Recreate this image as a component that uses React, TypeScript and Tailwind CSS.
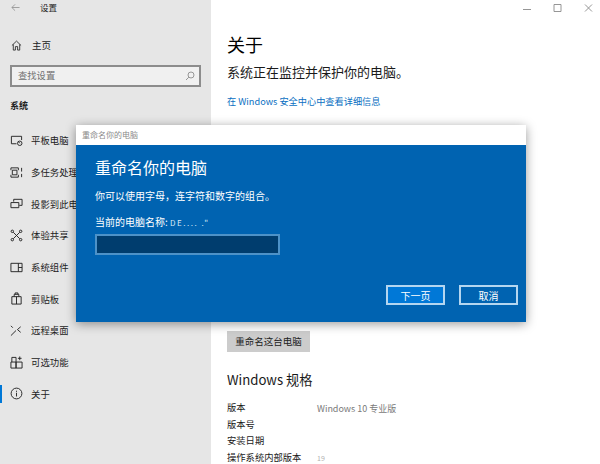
import React from 'react';

const FONT = '"Noto Sans CJK SC", "Liberation Sans", sans-serif';

function Icon({ children, className = '' }: { children: React.ReactNode; className?: string }) {
  return (
    <svg viewBox="0 0 14 14" fill="none" stroke="currentColor" strokeWidth="1" className={`w-[13px] h-[13px] shrink-0 ${className}`}>
      {children}
    </svg>
  );
}

const NAV_ITEMS: { label: string; icon: React.ReactNode }[] = [
  {
    label: '平板电脑',
    icon: (
      <>
        <path d="M7 10.500H1.500v-8h11v4" />
        <circle cx="10.500" cy="10" r="2.400" />
        <path d="M9 8l1.500 2" />
      </>
    ),
  },
  {
    label: '多任务处理',
    icon: (
      <>
        <path d="M1 2h8M1 12h8M2.500 4.500h5v5h-5zM1 2v2.500M1 9.500V12M9 2v2.500M9 9.500V12" />
        <path d="M12.500 2v4M12.500 8.500v3.500" />
      </>
    ),
  },
  {
    label: '投影到此电脑',
    icon: <path d="M4 5V2.500h9v6.500h-3M1 6h8.500v5.500H1z" />,
  },
  {
    label: '体验共享',
    icon: (
      <>
        <circle cx="2.500" cy="2.500" r="1.300" />
        <circle cx="11.500" cy="2.500" r="1.300" />
        <circle cx="2.500" cy="11.500" r="1.300" />
        <circle cx="11.500" cy="11.500" r="1.300" />
        <path d="M3.500 3.500l7 7M10.500 3.500l-7 7" />
      </>
    ),
  },
  {
    label: '系统组件',
    icon: <path d="M1 2.500h12v9H1zM9 2.500v9M9 7h4" />,
  },
  {
    label: '剪贴板',
    icon: <path d="M2 5h10v8H2zM7 5v8M4.500 5V2.500h5V5M5.500 2.500V1h3v1.500" />,
  },
  {
    label: '远程桌面',
    icon: <path d="M1 12.500l5.500-5.500M1 2l2 2M11.500 3L8 6l3.500 3" />,
  },
  {
    label: '可选功能',
    icon: <path d="M1 6.500h5.500V13H1zM6.500 6.500H13V13H6.500zM2 6.500V1.500h4.500v5M10.500 0.500v4M8.500 2.500h4" />,
  },
  {
    label: '关于',
    icon: (
      <>
        <circle cx="7" cy="7" r="5.800" />
        <path d="M7 6.200v4M7 4v1.200" />
      </>
    ),
  },
];

const SPEC_ROWS: [string, string][] = [
  ['版本', 'Windows 10 专业版'],
  ['版本号', ''],
  ['安装日期', ''],
  ['操作系统内部版本', '19'],
];

function Sidebar() {
  return (
    <aside className="w-[211px] h-full shrink-0 bg-[#e6e6e6] text-[#222222] flex flex-col">
      <div className="h-[15px] flex items-center pl-[11px]">
        <svg viewBox="0 0 10 10" fill="none" stroke="#8f8f8f" strokeWidth="0.9" className="w-[9px] h-[9px]">
          <path d="M9.500 5H1M4.500 1.500L1 5l3.500 3.500" />
        </svg>
        <span className="ml-[20px] text-[8.500px] leading-[15px]">设置</span>
      </div>
      <div className="mt-[21px] h-[18px] flex items-center pl-[11px]">
        <svg viewBox="0 0 12 12" fill="none" stroke="currentColor" strokeWidth="0.9" className="w-[11px] h-[11px]">
          <path d="M1 6l5-4.800L11 6M2.500 4.800V11h2.300V7.200h2.400V11h2.300V4.800" />
        </svg>
        <span className="ml-[10px] text-[9.500px] leading-[18px]">主页</span>
      </div>
      <div className="mt-[11px] mx-[10px] h-[22px] border-2 border-[#8c8c8c] bg-[#f0f0f0] flex items-center justify-between pl-[6px] pr-[4px]">
        <span className="text-[9.300px] text-[#707070]">查找设置</span>
        <svg viewBox="0 0 10 10" fill="none" stroke="#808080" strokeWidth="0.8" className="w-[10px] h-[10px]">
          <circle cx="6" cy="4" r="3" />
          <path d="M3.800 6.200L1 9" />
        </svg>
      </div>
      <div className="mt-[11px] pl-[10px] text-[9px] leading-[16px] font-bold">系统</div>
      <nav className="mt-[10.500px] flex flex-col">
        {NAV_ITEMS.map((item) => (
          <div key={item.label} className="relative h-[31.700px] flex items-center pl-[10px] overflow-hidden">
            {item.label === '关于' && <div className="absolute left-0 top-[7px] bottom-[7px] w-[2px] bg-[#0078d7]" />}
            <Icon>{item.icon}</Icon>
            <span className="ml-[8px] text-[9.400px] whitespace-nowrap">{item.label}</span>
          </div>
        ))}
      </nav>
    </aside>
  );
}

function MainPanel() {
  return (
    <main className="flex-1 h-full bg-white pl-[16px] text-[#1a1a1a] overflow-hidden">
      <div className="h-[15px] flex items-center justify-end text-[#8a8a8a]">
        <svg viewBox="0 0 80 10" fill="none" stroke="currentColor" strokeWidth="0.9" className="w-[80px] h-[10px]">
          <path d="M3 6.500h8" />
          <path d="M34 1.500h7v7h-7z" />
          <path d="M65 1.500l7 7M72 1.500l-7 7" />
        </svg>
      </div>
      <h1 className="mt-[16px] text-[18px] leading-[26px] font-normal text-black">关于</h1>
      <p className="mt-[6px] text-[13px] leading-[18px]">系统正在监控并保护你的电脑。</p>
      <a className="block mt-[12px] text-[9.200px] leading-[16px] text-[#0a6fc2]">在 Windows 安全中心中查看详细信息</a>
      <div className="mt-[222px] w-[83px] h-[21px] bg-[#cccccc] flex items-center justify-center text-[9.500px] text-[#222222]">
        重命名这台电脑
      </div>
      <h2 className="mt-[17px] text-[13.200px] leading-[22px] font-normal">Windows 规格</h2>
      <div className="mt-[9px] flex flex-col">
        {SPEC_ROWS.map(([label, value]) => (
          <div key={label} className="h-[16.500px] flex items-center text-[9.300px]">
            <span className="w-[90px] whitespace-nowrap">{label}</span>
            <span className={`whitespace-nowrap ${value === '19' ? 'text-[#b0b0b0] text-[7px]' : 'text-[#7a7a7a] text-[9px]'}`}>{value}</span>
          </div>
        ))}
      </div>
    </main>
  );
}

function RenameDialog() {
  return (
    <div className="absolute left-[76px] top-[125px] w-[450px] h-[197px] flex flex-col shadow-[0_2px_10px_rgba(0,0,0,0.4)]">
      <div className="h-[20px] bg-white flex items-center pl-[6px] text-[8px] text-[#8a8a8a]">重命名你的电脑</div>
      <div className="flex-1 bg-[#0063b1] text-white pl-[19px] pr-[8px] flex flex-col">
        <div className="mt-[10px] text-[16px] leading-[24px]">重命名你的电脑</div>
        <div className="mt-[9px] text-[10px] leading-[16px]">你可以使用字母，连字符和数字的组合。</div>
        <div className="mt-[10px] text-[10px] leading-[16px]">
          当前的电脑名称: <span className="text-[#dbe9f5] text-[8px] tracking-[1.500px]">DE.... ."</span>
        </div>
        <div className="mt-[3px] w-[185px] h-[21px] bg-[#003d6e] border-2 border-[#4d92c8]" />
        <div className="mt-[30px] flex justify-end gap-[14px]">
          <div className="w-[59px] h-[20px] bg-[#0078d7] border-2 border-[#b4d6f0] flex items-center justify-center text-[10px]">下一页</div>
          <div className="w-[59px] h-[20px] border-2 border-[#b4d6f0] flex items-center justify-center text-[10px]">取消</div>
        </div>
      </div>
    </div>
  );
}

export default function App() {
  return (
    <div className="relative w-[600px] h-[464px] flex overflow-hidden bg-white" style={{ fontFamily: FONT }}>
      <Sidebar />
      <MainPanel />
      <RenameDialog />
    </div>
  );
}
